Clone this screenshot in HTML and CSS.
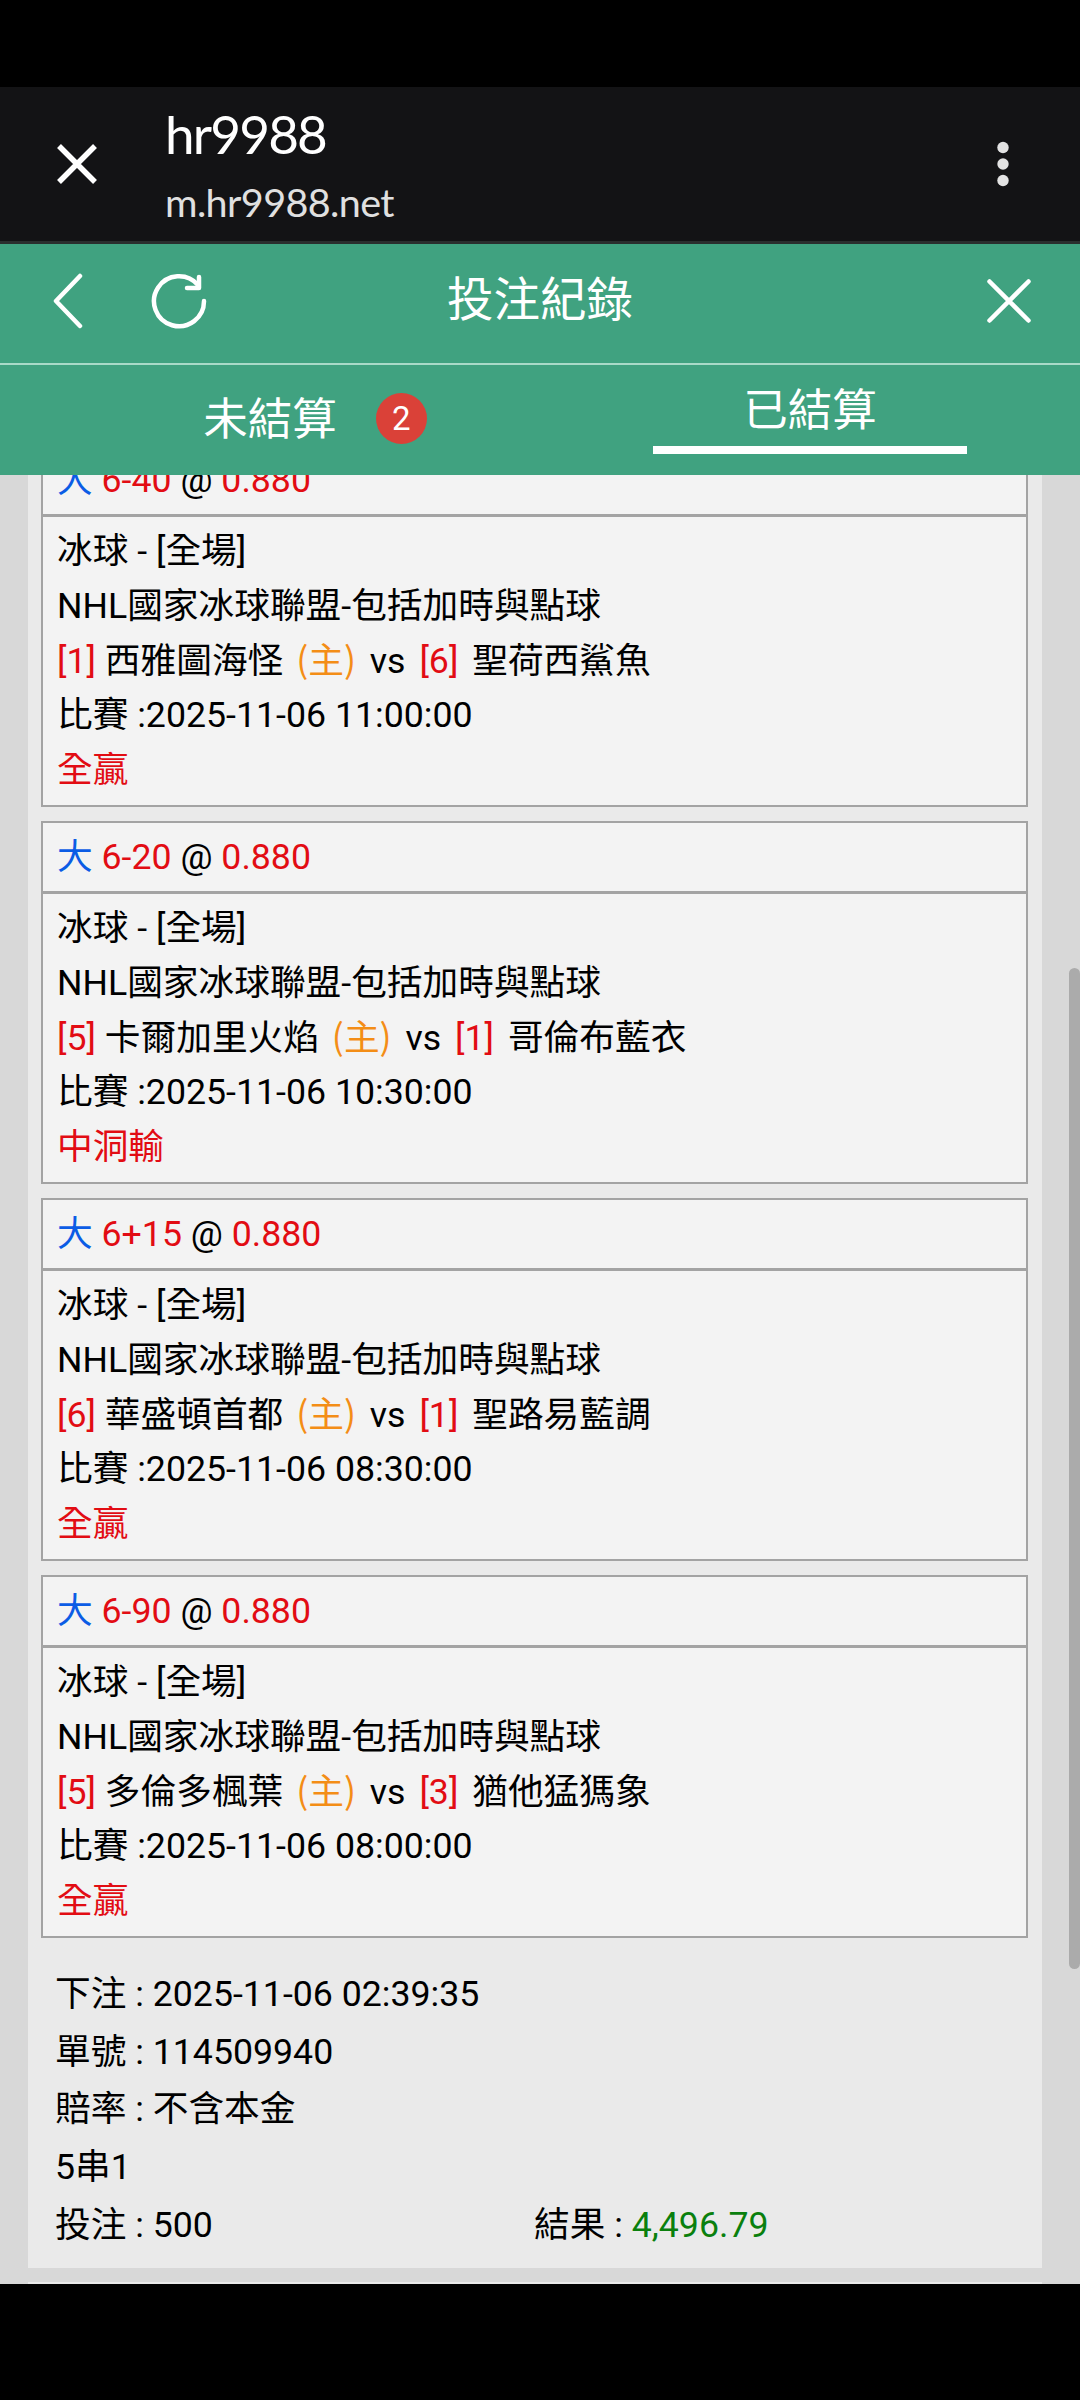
FILE: index.html
```html
<!DOCTYPE html>
<html lang="zh-Hant">
<head>
  <meta charset="UTF-8">
  <meta name="viewport" content="width=device-width, initial-scale=1.0">
  <title>投注紀錄</title>
  <link rel="stylesheet" href="styles.css">
</head>
<body>

<div class="browser-bar">
  <svg class="browser-close" width="48" height="48" viewBox="0 0 48 48">
    <path d="M6 6L42 42M42 6L6 42"/>
  </svg>
  <div class="site">
    <div class="site-title">hr9988</div>
    <div class="site-url">m.hr9988.net</div>
  </div>
  <svg class="browser-menu" width="12" height="48" viewBox="0 0 12 48">
    <circle cx="6" cy="7.5" r="5.7"/>
    <circle cx="6" cy="24" r="5.7"/>
    <circle cx="6" cy="40.5" r="5.7"/>
  </svg>
</div>

<div class="header">
  <div class="header-left">
    <svg width="30" height="56" viewBox="0 0 30 56">
      <path d="M27 3L3 28L27 53"/>
    </svg>
    <svg width="56" height="56" viewBox="0 0 56 56">
      <path d="M53 28A25 25 0 1 1 47 12"/>
      <path d="M48 4V15H36"/>
    </svg>
  </div>
  <h1>投注紀錄</h1>
  <svg class="header-close" width="48" height="48" viewBox="0 0 48 48">
    <path d="M4.5 4.5L43.5 43.5M43.5 4.5L4.5 43.5"/>
  </svg>
</div>

<div class="tabs">
  <div class="tab">
    <span class="tab-label">未結算</span>
    <span class="badge">2</span>
  </div>
  <div class="tab">
    <span class="active">已結算</span>
  </div>
</div>

<div class="content">
  <div class="card first">
    <div class="bet">
      <div class="bet-head"><span class="blue">大</span> <span class="red">6-40</span> @ <span class="red">0.880</span></div>
      <div class="bet-body">
        <div>冰球 - [全場]</div>
        <div>NHL國家冰球聯盟-包括加時與點球</div>
        <div><span class="red">[1]</span> 西雅圖海怪 <span class="home">(主)</span> <span class="vs">vs</span> <span class="red">[6]</span> <span class="away">聖荷西鯊魚</span></div>
        <div>比賽 :2025-11-06 11:00:00</div>
        <div class="red">全贏</div>
      </div>
    </div>

    <div class="bet">
      <div class="bet-head"><span class="blue">大</span> <span class="red">6-20</span> @ <span class="red">0.880</span></div>
      <div class="bet-body">
        <div>冰球 - [全場]</div>
        <div>NHL國家冰球聯盟-包括加時與點球</div>
        <div><span class="red">[5]</span> 卡爾加里火焰 <span class="home">(主)</span> <span class="vs">vs</span> <span class="red">[1]</span> <span class="away">哥倫布藍衣</span></div>
        <div>比賽 :2025-11-06 10:30:00</div>
        <div class="red">中洞輸</div>
      </div>
    </div>

    <div class="bet">
      <div class="bet-head"><span class="blue">大</span> <span class="red">6+15</span> @ <span class="red">0.880</span></div>
      <div class="bet-body">
        <div>冰球 - [全場]</div>
        <div>NHL國家冰球聯盟-包括加時與點球</div>
        <div><span class="red">[6]</span> 華盛頓首都 <span class="home">(主)</span> <span class="vs">vs</span> <span class="red">[1]</span> <span class="away">聖路易藍調</span></div>
        <div>比賽 :2025-11-06 08:30:00</div>
        <div class="red">全贏</div>
      </div>
    </div>

    <div class="bet">
      <div class="bet-head"><span class="blue">大</span> <span class="red">6-90</span> @ <span class="red">0.880</span></div>
      <div class="bet-body">
        <div>冰球 - [全場]</div>
        <div>NHL國家冰球聯盟-包括加時與點球</div>
        <div><span class="red">[5]</span> 多倫多楓葉 <span class="home">(主)</span> <span class="vs">vs</span> <span class="red">[3]</span> <span class="away">猶他猛獁象</span></div>
        <div>比賽 :2025-11-06 08:00:00</div>
        <div class="red">全贏</div>
      </div>
    </div>

    <div class="summary">
      <div>下注 : 2025-11-06 02:39:35</div>
      <div>單號 : 114509940</div>
      <div>賠率 : 不含本金</div>
      <div>5串1</div>
      <div class="summary-row">
        <span>投注 : 500</span>
        <span>結果 : <span class="green">4,496.79</span></span>
      </div>
    </div>
  </div>
  <div class="card"></div>
  <div class="scrollbar"></div>
</div>

</body>
</html>
```
FILE: styles.css
```css
* {
  box-sizing: border-box;
}
body {
  margin: 0;
  padding-top: 87px;
  height: 2400px;
  overflow: hidden;
  background-color: #000;
  font-family: Roboto, "Noto Sans CJK TC", sans-serif;
  font-size: 35.7px;
  color: #000;
}
svg {
  display: block;
  flex: none;
  fill: none;
  stroke: #fff;
  stroke-width: 4.5;
  stroke-linecap: round;
  stroke-linejoin: round;
}

/* browser bar */
.browser-bar {
  display: flex;
  align-items: center;
  height: 157px;
  padding: 0 71px 0 53px;
  background-color: #131315;
  border-bottom: 3px solid #2a2e2e;
}
.browser-close {
  stroke-width: 5.5;
  stroke-linecap: butt;
}
.site {
  flex: 1;
  margin-left: 64px;
  padding-top: 6px;
  font-family: Lato, sans-serif;
}
.site-title {
  font-size: 53px;
  line-height: 70px;
  letter-spacing: -1.8px;
  color: #fff;
}
.site-url {
  font-size: 39.5px;
  line-height: 66px;
  letter-spacing: -0.6px;
  color: #e0e0e0;
}
.browser-menu {
  fill: #e3e3e3;
  stroke: none;
}

/* page header */
.header {
  display: grid;
  grid-template-columns: 1fr auto 1fr;
  align-items: center;
  height: 121px;
  padding: 0 47px 5px 53px;
  background-color: #40a280;
  border-bottom: 2px solid #a9dac8;
  color: #fff;
}
.header-left {
  display: flex;
  gap: 68px;
}
.header h1 {
  margin: 0 0 3px;
  padding-right: 6px;
  font-size: 46.5px;
  font-weight: 400;
  line-height: 60px;
}
.header-close {
  justify-self: end;
}
.tabs {
  display: grid;
  grid-template-columns: 1fr 1fr;
  height: 110px;
  background-color: #40a280;
  color: #fff;
  font-size: 44.5px;
}
.tab {
  display: flex;
  align-items: center;
  justify-content: center;
  gap: 39px;
  padding-left: 90px;
  padding-bottom: 3px;
}
.tab:last-child {
  padding-left: 0;
}
.tab-label {
  padding-bottom: 7px;
}
.badge {
  width: 51px;
  height: 51px;
  border-radius: 50%;
  background-color: #da4138;
  font-size: 33px;
  line-height: 51px;
  text-align: center;
}
.active {
  width: 314px;
  height: 71px;
  border-bottom: 8px solid #fff;
  line-height: 56px;
  text-align: center;
}

/* bet list */
.content {
  position: relative;
  height: 1809px;
  overflow: hidden;
  padding: 0 38px 0 28px;
  background-color: #d8d8d8;
}
.card {
  height: 200px;
  margin-top: 14px;
  padding: 0 14px 0 13px;
  background-color: #eaeaea;
}
/* list is scrolled, the first bet starts under the tabs */
.card.first {
  height: 1824px;
  margin-top: -31px;
}
.bet {
  height: 363px;
  margin-bottom: 14px;
  border: 2px solid #a3a3a3;
  background-color: #f3f3f3;
}
.bet-head {
  height: 71px;
  padding-left: 14px;
  border-bottom: 3px solid #a3a3a3;
  line-height: 68px;
}
.bet-body {
  padding: 7px 14px;
  line-height: 54.8px;
  white-space: nowrap;
}
.bet-body div {
  height: 54.8px;
}
.blue {
  color: #0b5ce5;
}
.red {
  color: #e20c13;
}
.green {
  color: #0a800e;
}
.home {
  margin-left: 4px;
  font-family: "Noto Sans CJK TC", sans-serif;
  line-height: 1;
  color: #f38d16;
}
.vs {
  margin: 0 5px;
}
.away {
  margin-left: 5px;
}
.summary {
  padding: 14px;
  line-height: 57.7px;
}
.summary div {
  height: 57.7px;
}
.summary-row {
  display: grid;
  grid-template-columns: 479px 1fr;
}
.scrollbar {
  position: absolute;
  top: 493px;
  right: 0;
  width: 11px;
  height: 1001px;
  border-radius: 6px;
  background-color: #ababab;
}
```
